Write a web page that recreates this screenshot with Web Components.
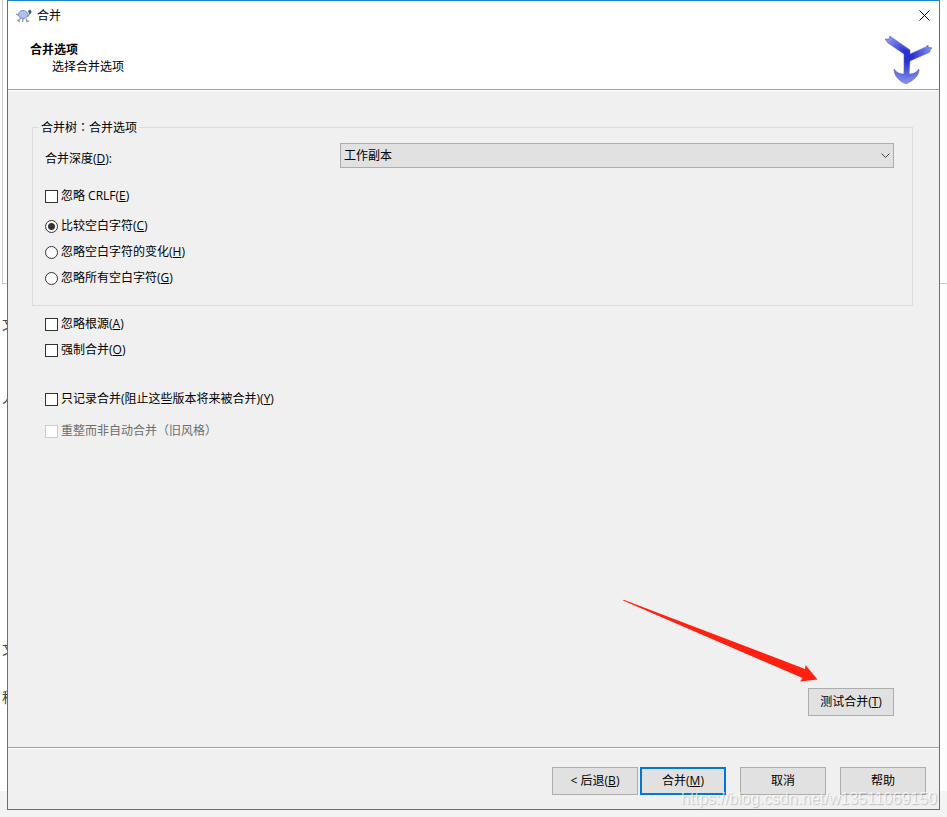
<!DOCTYPE html>
<html lang="zh-CN">
<head>
<meta charset="utf-8">
<meta name="viewport" content="width=device-width, initial-scale=1">
<title>合并</title>
<style>
  html, body {
    height: 100%;
  }

  body {
    margin: 0;
    background: #fff;
    color: #000;
    font: 12px/16px "Open Sans", "Noto Sans CJK SC", sans-serif;
  }
</style>
</head>
<body>
<merge-desktop>
  <merge-dialog heading="合并">
    <dialog-banner slot="banner" heading="合并选项">选择合并选项</dialog-banner>
    <merge-options></merge-options>
    <dialog-actions slot="actions"></dialog-actions>
  </merge-dialog>
</merge-desktop>

<script>
class MergeDesktop extends HTMLElement {
  constructor() {
    super();

    this.attachShadow({ mode: 'open' });
    this.shadowRoot.innerHTML = `
      <style>
        :host {
          display: grid;
          position: relative;
          box-sizing: border-box;
          min-height: 100vh;
          padding: 0 7px 7px;
          overflow: hidden;
          background: linear-gradient(#f3f3f3, #f3f3f3) bottom / 100% 26px no-repeat #fff;
        }

        #panel {
          position: absolute;
          top: 0;
          left: 2px;
          right: 0;
          height: 283px;
          border-left: 1px solid #ccc;
          border-bottom: 1px solid #ccc;
        }

        /* Text of the window behind, mostly hidden by the dialog */
        .behind {
          position: absolute;
          left: 2px;
          color: #444;
          font-size: 14px;
        }

        slot {
          display: grid;
          position: relative;
        }

        #watermark {
          position: absolute;
          right: 10px;
          bottom: 8px;
          color: rgba(255, 255, 255, .7);
          font: 16px/20px "Liberation Sans", sans-serif;
          text-shadow: 1px 1px 1px rgba(0, 0, 0, .2);
          pointer-events: none;
        }

        #arrow {
          position: absolute;
          right: 129px;
          bottom: 135px;
          width: 196px;
          height: 84px;
          pointer-events: none;
        }
      </style>

      <div id="panel"></div>
      <span class="behind" style="top: 316px">文</span>
      <span class="behind" style="top: 390px">人</span>
      <span class="behind" style="top: 641px">文</span>
      <span class="behind" style="top: 689px">程</span>
      <slot></slot>
      <svg id="arrow" viewBox="0 0 196 84" aria-hidden="true">
        <path d="M1 2.500 1.500 1.800 183 71 183.500 67 195.500 81.500 178 83.500 180.500 80Z" fill="#ff2010"/>
      </svg>
      <div id="watermark">https://blog.csdn.net/w13511069150</div>
    `;
  }
}

class MergeDialog extends HTMLElement {
  constructor() {
    super();

    this.attachShadow({ mode: 'open' });
    this.shadowRoot.innerHTML = `
      <style>
        :host {
          display: flex;
          flex-direction: column;
          border: 1px solid #1883d7;
          background: #f0f0f0;
        }

        #title {
          display: flex;
          align-items: center;
          gap: 5px;
          height: 30px;
          padding: 0 8px;
          background: #fff;
        }

        h1 {
          flex: 1;
          margin: 0;
          font-size: 12px;
          font-weight: normal;
        }

        #close {
          display: flex;
          padding: 2px 1px 3px;
          border: 0;
          background: none;
        }

        #main {
          flex: 1;
          padding: 29px 24px 31px;
        }

        #actions {
          border-top: 1px solid #a0a0a0;
          box-shadow: inset 0 1px #fff;
        }
      </style>

      <header id="title">
        <svg width="16" height="14" viewBox="0 0 16 14" aria-hidden="true">
          <path d="M0 5 3 6.500M5 9 2 11.500 4 12.500M7 10 6.500 13M10 9.500 11 12.500 13 12M11 8 13.500 5" fill="none" stroke="#9a9da3" stroke-width="1.500"/>
          <ellipse cx="7" cy="5.500" rx="4.500" ry="4" fill="#a9c3fa" stroke="#8292b5"/>
          <path d="M12 2 14 .5 15.500 2 15 4.500 13 5Z" fill="#3a6570"/>
        </svg>
        <h1></h1>
        <button id="close" type="button" aria-label="关闭">
          <svg width="11" height="11" viewBox="0 0 11 11">
            <path d="M.5 .5 10.500 10.500M10.500 .5 .5 10.500" fill="none" stroke="#000"/>
          </svg>
        </button>
      </header>
      <slot name="banner"></slot>
      <main id="main"><slot></slot></main>
      <footer id="actions"><slot name="actions"></slot></footer>
    `;
    this.shadowRoot.querySelector('h1').textContent = this.getAttribute('heading');
  }
}

class DialogBanner extends HTMLElement {
  constructor() {
    super();

    this.attachShadow({ mode: 'open' });
    this.shadowRoot.innerHTML = `
      <style>
        :host {
          display: flex;
          justify-content: space-between;
          height: 58px;
          padding: 0 6px 0 22px;
          border-bottom: 1px solid #a0a0a0;
          background: #fff;
          box-shadow: 0 1px #fff;
        }

        #text {
          padding-top: 11px;
        }

        h2 {
          margin: 0;
          font-size: 12px;
        }

        p {
          margin: 1px 0 0 22px;
        }

        svg {
          margin-top: 5px;
        }
      </style>

      <div id="text">
        <h2></h2>
        <p><slot></slot></p>
      </div>
      <svg width="48" height="48" viewBox="0 0 48 48" aria-hidden="true">
        <defs>
          <radialGradient id="blue" gradientUnits="userSpaceOnUse" cx="22" cy="21" r="27">
            <stop offset=".2" stop-color="#2a30d4"/>
            <stop offset="1" stop-color="#8c98f0"/>
          </radialGradient>
        </defs>
        <path d="M0 3 4 3 5 0 9 3 25 14 25 18 41 11 43 9 43 11 47 12 45 14 45 16 25 25 24 38C28 38 31 37 34 33C34 40 29 44 21 48C14 45 9 40 9 33C12 37 15 38 19 38L19 18 3 7Z" fill="url(#blue)" stroke="#5964ad" stroke-width=".6"/>
      </svg>
    `;
    this.shadowRoot.querySelector('h2').textContent = this.getAttribute('heading');
  }
}

// Shared by the check boxes and the radio buttons
class OptionField extends HTMLElement {
  constructor() {
    super();

    const type = this.getAttribute('type') || 'checkbox';

    this.attachShadow({ mode: 'open' });
    this.shadowRoot.innerHTML = `
      <style>
        :host {
          display: flex;
        }

        label {
          display: flex;
          align-items: center;
          gap: 3px;
        }

        input {
          appearance: none;
          box-sizing: border-box;
          width: 13px;
          height: 13px;
          margin: 0;
          border: 1px solid #333;
          background: #fff;
        }

        input[type="radio"] {
          border-radius: 50%;
        }

        input[type="radio"]:checked {
          background: radial-gradient(circle, #333 3px, #fff 4px);
        }

        :host([disabled]) label {
          color: #6d6d6d;
        }

        :host([disabled]) input {
          border-color: #ccc;
        }
      </style>

      <label>
        <input type="${type}">
        <span><slot></slot></span>
      </label>
    `;

    const input = this.shadowRoot.querySelector('input');
    input.checked = this.hasAttribute('checked');
    input.disabled = this.hasAttribute('disabled');
  }
}

class DialogButton extends HTMLElement {
  constructor() {
    super();

    this.attachShadow({ mode: 'open' });
    this.shadowRoot.innerHTML = `
      <style>
        :host {
          display: block;
        }

        button {
          display: block;
          width: 86px;
          height: 28px;
          padding: 0;
          border: 1px solid #adadad;
          background: #e1e1e1;
          color: inherit;
          font: inherit;
        }

        :host([primary]) button {
          border: 2px solid #0078d7;
        }
      </style>

      <button type="button"><slot></slot></button>
    `;
  }
}

class MergeOptions extends HTMLElement {
  constructor() {
    super();

    this.attachShadow({ mode: 'open' });
    this.shadowRoot.innerHTML = `
      <style>
        :host {
          display: flex;
          flex-direction: column;
          height: 100%;
        }

        fieldset {
          margin: 0 2px 0 0;
          padding: 7px 18px 19px 12px;
          border: 1px solid #dcdcdc;
        }

        legend {
          margin-left: -6px;
          padding: 0 2px;
        }

        /* The TC face centres the full-width colon */
        legend span {
          font-family: "Noto Sans CJK TC", sans-serif;
        }

        #depth {
          display: grid;
          grid-template-columns: 295px 1fr;
          align-items: start;
          margin-bottom: 20px;
        }

        #depth label {
          padding-top: 8px;
        }

        #select {
          display: grid;
          align-items: center;
        }

        select, #select svg {
          grid-area: 1 / 1;
        }

        select {
          appearance: none;
          width: 100%;
          height: 25px;
          padding: 0 3px;
          border: 1px solid #adadad;
          border-radius: 0;
          background: #e1e1e1;
          color: inherit;
          font: inherit;
        }

        #select svg {
          justify-self: end;
          margin-right: 4px;
          pointer-events: none;
        }

        #radios {
          display: grid;
          gap: 10px;
          margin-top: 14px;
        }

        #more {
          display: grid;
          gap: 10px;
          padding: 10px 13px;
        }

        #record {
          margin-top: 23px;
        }

        #old {
          margin-top: 6px;
        }

        #test {
          align-self: flex-end;
          margin: auto 21px 0 0;
        }
      </style>

      <fieldset>
        <legend>合并树<span lang="zh-TW">：</span>合并选项</legend>
        <div id="depth">
          <label for="level">合并深度(<u>D</u>):</label>
          <div id="select">
            <select id="level">
              <option>工作副本</option>
            </select>
            <svg width="9" height="6" viewBox="0 0 9 6" aria-hidden="true">
              <path d="M.5 .5 4.500 4.500 8.500 .5" fill="none" stroke="#444"/>
            </svg>
          </div>
        </div>
        <option-field>忽略 CRLF(<u>E</u>)</option-field>
        <div id="radios" role="radiogroup">
          <option-field type="radio" checked>比较空白字符(<u>C</u>)</option-field>
          <option-field type="radio">忽略空白字符的变化(<u>H</u>)</option-field>
          <option-field type="radio">忽略所有空白字符(<u>G</u>)</option-field>
        </div>
      </fieldset>
      <div id="more">
        <option-field>忽略根源(<u>A</u>)</option-field>
        <option-field>强制合并(<u>O</u>)</option-field>
        <option-field id="record">只记录合并(阻止这些版本将来被合并)(<u>Y</u>)</option-field>
        <option-field id="old" disabled>重整而非自动合并（旧风格）</option-field>
      </div>
      <dialog-button id="test">测试合并(<u>T</u>)</dialog-button>
    `;
  }
}

class DialogActions extends HTMLElement {
  constructor() {
    super();

    this.attachShadow({ mode: 'open' });
    this.shadowRoot.innerHTML = `
      <style>
        :host {
          display: flex;
          justify-content: flex-end;
          gap: 14px;
          padding: 19px 13px 14px;
        }

        #steps {
          display: flex;
          gap: 2px;
        }
      </style>

      <div id="steps">
        <dialog-button>&lt; 后退(<u>B</u>)</dialog-button>
        <dialog-button primary>合并(<u>M</u>)</dialog-button>
      </div>
      <dialog-button>取消</dialog-button>
      <dialog-button>帮助</dialog-button>
    `;
  }
}

customElements.define('merge-desktop', MergeDesktop);
customElements.define('merge-dialog', MergeDialog);
customElements.define('dialog-banner', DialogBanner);
customElements.define('option-field', OptionField);
customElements.define('dialog-button', DialogButton);
customElements.define('merge-options', MergeOptions);
customElements.define('dialog-actions', DialogActions);
</script>
</body>
</html>
